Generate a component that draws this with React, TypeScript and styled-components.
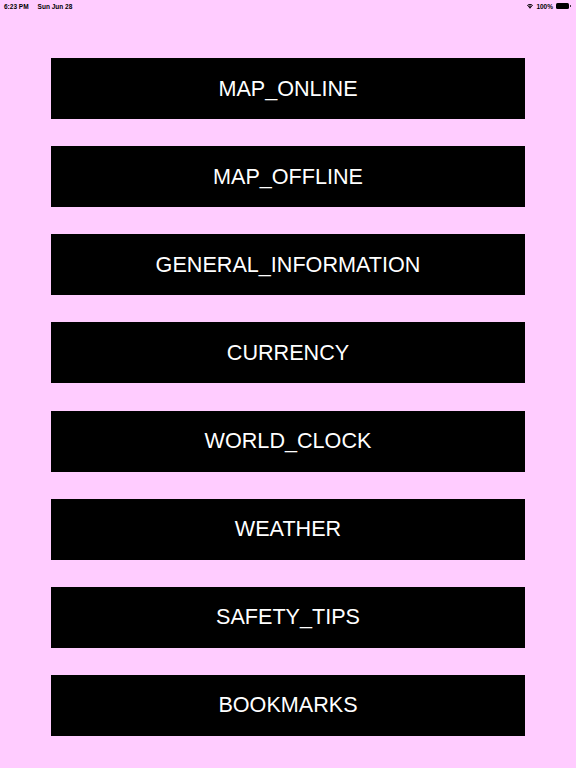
import React from "react";
import styled, { createGlobalStyle } from "styled-components";

const Global = createGlobalStyle`
  html, body { margin: 0; padding: 0; background: #ffccff; }
  body { font-family: "Liberation Sans", Arial, sans-serif; }
`;

const Page = styled.div`
  width: 576px;
  height: 768px;
  background: #ffccff;
  display: flex;
  flex-direction: column;
  overflow: hidden;
`;

const StatusBar = styled.div`
  height: 12px;
  padding: 0 4px 0 4px;
  display: flex;
  align-items: center;
  justify-content: space-between;
  font-size: 6.5px;
  font-weight: 700;
  color: #000;
  font-family: "Liberation Sans", Arial, sans-serif;
`;

const StatusLeft = styled.div`
  display: flex;
  gap: 9px;
`;

const StatusRight = styled.div`
  display: flex;
  align-items: center;
  gap: 2px;
`;

const Battery = styled.div`
  width: 16px;
  height: 7px;
  display: flex;
  align-items: center;
  margin-left: 1px;
`;

const BatteryBody = styled.div`
  width: 13px;
  height: 5.5px;
  border-radius: 1.5px;
  background: #000;
`;

const BatteryTip = styled.div`
  width: 1.5px;
  height: 2.5px;
  background: #000;
  margin-left: 0.8px;
  border-radius: 0 1px 1px 0;
`;

const Menu = styled.div`
  padding-top: 46px;
  padding-left: 51px;
  display: flex;
  flex-direction: column;
  gap: 27.14px;
`;

const MenuButton = styled.button`
  width: 474px;
  height: 61px;
  background: #000;
  color: #fff;
  border: none;
  padding: 0;
  margin: 0;
  font-family: "Liberation Sans", Arial, sans-serif;
  font-size: 21.6px;
  display: flex;
  align-items: center;
  justify-content: center;
  cursor: pointer;
`;

const items = [
  "MAP_ONLINE",
  "MAP_OFFLINE",
  "GENERAL_INFORMATION",
  "CURRENCY",
  "WORLD_CLOCK",
  "WEATHER",
  "SAFETY_TIPS",
  "BOOKMARKS",
];

export default function App() {
  return (
    <Page>
      <Global />
      <StatusBar>
        <StatusLeft>
          <span>6:23 PM</span>
          <span>Sun Jun 28</span>
        </StatusLeft>
        <StatusRight>
          <svg width="8" height="6" viewBox="0 0 10 8">
            <path d="M5 7.5 L3.4 5.8 A2.3 2.3 0 0 1 6.6 5.8 Z" fill="#000" />
            <path d="M2.3 4.7 A3.9 3.9 0 0 1 7.7 4.7 L6.9 5.5 A2.8 2.8 0 0 0 3.1 5.5 Z" fill="#000" />
            <path d="M0.9 3.3 A5.9 5.9 0 0 1 9.1 3.3 L8.3 4.1 A4.8 4.8 0 0 0 1.7 4.1 Z" fill="#000" />
          </svg>
          <span>100%</span>
          <Battery>
            <BatteryBody />
            <BatteryTip />
          </Battery>
        </StatusRight>
      </StatusBar>
      <Menu>
        {items.map((it) => (
          <MenuButton key={it}>{it}</MenuButton>
        ))}
      </Menu>
    </Page>
  );
}
